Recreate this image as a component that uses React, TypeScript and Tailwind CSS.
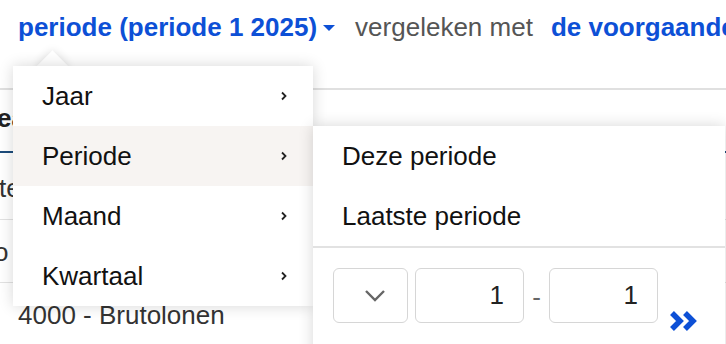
import React from "react";

const Chevron = () => (
  <svg width="8" height="10" viewBox="0 0 8 10" className="block shrink-0">
    <path d="M2 1.5 L5.5 5 L2 8.5" fill="none" stroke="#222" strokeWidth="1.8" />
  </svg>
);

export default function App() {
  const font = { fontFamily: '"Liberation Sans", Arial, sans-serif' };
  return (
    <div className="relative w-[726px] h-[344px] overflow-hidden bg-white text-[26px] text-[#333]" style={font}>
      {/* header */}
      <div className="flex items-center h-[30px] mt-[12px] pl-[18px] leading-[30px] whitespace-nowrap">
        <span className="shrink-0 font-bold text-[#0d50d6]">periode (periode 1 2025)</span>
        <svg width="12" height="6" viewBox="0 0 12 6" className="shrink-0 ml-[6px] mt-[2px]">
          <path d="M0 0 L12 0 L6 6 Z" fill="#0d50d6" />
        </svg>
        <span className="shrink-0 ml-[20px] text-[#555]">vergeleken met</span>
        <span className="shrink-0 ml-[18px] font-bold text-[#0d50d6]">de voorgaande periode</span>
      </div>
      <div className="mt-[46px] h-[2px] bg-[#e0e0e0]" />
      {/* table behind */}
      <div className="flex flex-col whitespace-nowrap">
        <div className="h-[61px] flex items-end pb-[18px] -ml-[3px] font-bold text-[#222] leading-[30px]">eader</div>
        <div className="h-[2px] bg-[#1d4c7c]" />
        <div className="h-[67px] pt-[20px] -ml-[1px] leading-[30px] text-[#333] border-b border-[#e2e2e2]">te</div>
        <div className="h-[63px] pt-[17px] -ml-[6px] leading-[30px] text-[#333] border-b border-[#e2e2e2]">o</div>
        <div className="h-[63px] pt-[17px] pl-[18px] leading-[30px] text-[#333]">4000 - Brutolonen</div>
      </div>

      {/* main menu */}
      <div className="absolute left-[41px] top-[55px] w-[23px] h-[23px] rotate-45 bg-white shadow-[0_0_10px_rgba(0,0,0,0.14)]" />
      <div className="absolute left-[13px] top-[66px] w-[300px] bg-white shadow-[0_0_14px_rgba(0,0,0,0.16)] text-[#111]">
        {["Jaar", "Periode", "Maand", "Kwartaal"].map((t) => (
          <div
            key={t}
            className={
              "flex items-center justify-between h-[60px] pl-[29px] pr-[25px] " +
              (t === "Periode" ? "bg-[#f7f4f2]" : "bg-white")
            }
          >
            <span>{t}</span>
            <Chevron />
          </div>
        ))}
      </div>

      {/* submenu */}
      <div className="absolute left-[313px] top-[126px] w-[412px] h-[240px] bg-white shadow-[0_0_14px_rgba(0,0,0,0.16)] text-[#111]">
        <div className="h-[60px] flex items-center pl-[29px]">Deze periode</div>
        <div className="h-[60px] flex items-center pl-[29px]">Laatste periode</div>
        <div className="h-[2px] bg-[#e2e2e2]" />
        <div className="flex items-start pl-[20px] pt-[20px]">
          <div className="shrink-0 w-[75px] h-[55px] rounded-[6px] border border-[#d6d6d6] flex items-center justify-center pl-[9px]">
            <svg width="22" height="14" viewBox="0 0 22 14">
              <path d="M2 2 L11 11 L20 2" fill="none" stroke="#666" strokeWidth="2.4" />
            </svg>
          </div>
          <div className="shrink-0 ml-[7px] w-[109px] h-[55px] rounded-[6px] border border-[#d6d6d6] flex items-center justify-end pr-[19px] text-[#222]">1</div>
          <div className="shrink-0 w-[25px] h-[55px] flex items-center justify-center text-[#666] pt-[4px]">-</div>
          <div className="shrink-0 w-[109px] h-[55px] rounded-[6px] border border-[#d6d6d6] flex items-center justify-end pr-[19px] text-[#222]">1</div>
          <svg width="30" height="22" viewBox="0 0 30 22" className="shrink-0 ml-[11px] mt-[42px]">
            <path d="M3 3 L11 11 L3 19" fill="none" stroke="#0d50d6" strokeWidth="5.5" strokeLinejoin="miter" />
            <path d="M16 3 L24 11 L16 19" fill="none" stroke="#0d50d6" strokeWidth="5.5" strokeLinejoin="miter" />
          </svg>
        </div>
      </div>
    </div>
  );
}
